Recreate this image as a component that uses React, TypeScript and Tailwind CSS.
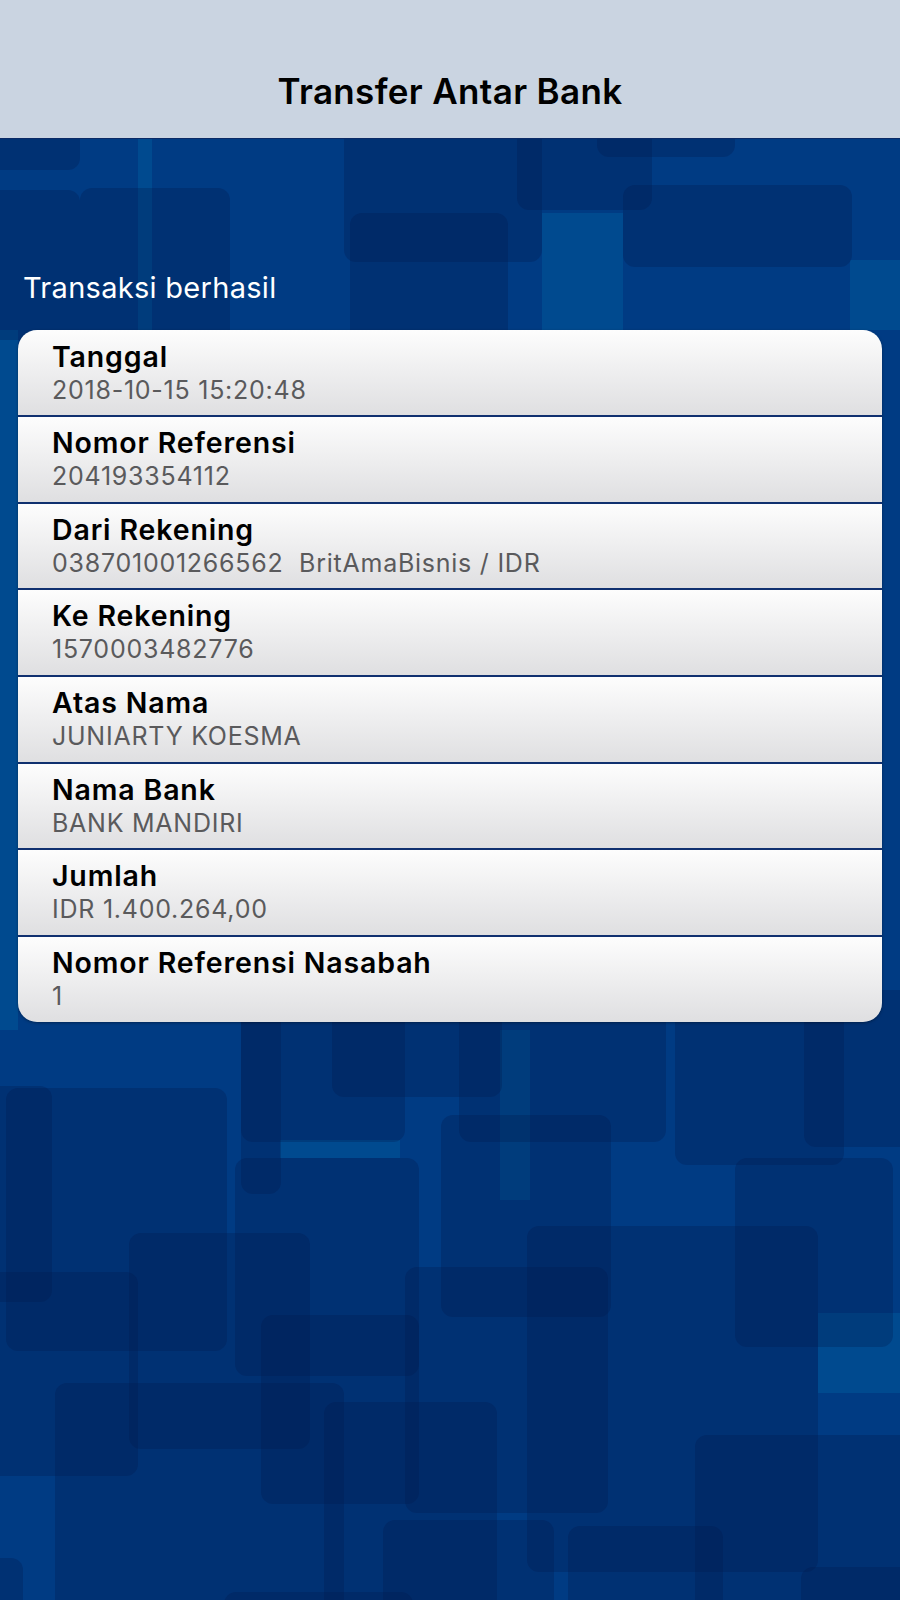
import React from 'react';

type Row = { label: string; value: string };

const rows: Row[] = [
  { label: 'Tanggal', value: '2018-10-15 15:20:48' },
  { label: 'Nomor Referensi', value: '204193354112' },
  { label: 'Dari Rekening', value: '038701001266562  BritAmaBisnis / IDR' },
  { label: 'Ke Rekening', value: '1570003482776' },
  { label: 'Atas Nama', value: 'JUNIARTY KOESMA' },
  { label: 'Nama Bank', value: 'BANK MANDIRI' },
  { label: 'Jumlah', value: 'IDR 1.400.264,00' },
  { label: 'Nomor Referensi Nasabah', value: '1' },
];

// decorative tiles of the backdrop: [x, y, w, h]
const lightTiles = [
  [138, 100, 14, 230],
  [542, 213, 81, 117],
  [850, 260, 60, 70],
  [500, 1030, 30, 170],
  [280, 1140, 120, 18],
  [818, 1313, 90, 80],
  [0, 330, 18, 700],
];

const darkTiles = [
  [-20, 100, 100, 70],
  [80, 188, 150, 200],
  [344, 100, 198, 162],
  [517, 100, 135, 110],
  [623, 185, 229, 82],
  [597, 100, 138, 57],
  [-20, 190, 100, 150],
  [350, 213, 158, 150],
  [-20, 1086, 72, 216],
  [6, 1088, 221, 263],
  [241, 990, 40, 204],
  [332, 990, 170, 107],
  [241, 990, 164, 152],
  [459, 990, 207, 152],
  [675, 990, 169, 175],
  [804, 990, 120, 157],
  [235, 1158, 184, 218],
  [129, 1233, 181, 216],
  [-20, 1272, 158, 204],
  [441, 1115, 170, 202],
  [527, 1226, 291, 346],
  [735, 1158, 158, 189],
  [405, 1267, 203, 246],
  [261, 1315, 158, 189],
  [55, 1383, 289, 260],
  [324, 1402, 173, 240],
  [695, 1435, 220, 200],
  [383, 1520, 171, 120],
  [568, 1526, 155, 120],
  [-20, 1558, 43, 80],
  [801, 1567, 120, 80],
  [224, 1592, 189, 40],
];

const Backdrop = () => (
  <svg
    className="absolute inset-0 h-full w-full"
    viewBox="0 0 900 1600"
    preserveAspectRatio="none"
  >
    <rect x="0" y="0" width="900" height="1600" fill="#003b83" />
    {lightTiles.map(([x, y, w, h], i) => (
      <rect key={`l${i}`} x={x} y={y} width={w} height={h} fill="#004a8f" />
    ))}
    {darkTiles.map(([x, y, w, h], i) => (
      <rect
        key={`d${i}`}
        x={x}
        y={y}
        width={w}
        height={h}
        rx="12"
        fill="#001a4d"
        fillOpacity="0.28"
      />
    ))}
  </svg>
);

const DetailRow = ({ label, value, first }: Row & { first: boolean }) => (
  <div
    className={`flex flex-col bg-gradient-to-b from-[#fdfdfd] to-[#dfdfe1] pl-[34px] ${
      first ? 'h-[85px] pt-[10px]' : 'h-[86.7px] border-t-2 border-[#10306f] pt-[9px]'
    }`}
  >
    <span className="text-[28.5px] font-semibold leading-[34px] tracking-[0.03em] text-black">
      {label}
    </span>
    <span className="mt-[2px] whitespace-pre text-[25px] leading-[29px] tracking-[0.03em] text-[#5a5a5c]">
      {value}
    </span>
  </div>
);

export default function App() {
  return (
    <div
      className="relative min-h-[1600px] w-full overflow-hidden"
      style={{ fontFamily: 'Inter, "Noto Sans", sans-serif' }}
    >
      <Backdrop />
      <div className="relative flex flex-col">
        <header className="h-[139px] border-b border-[#0b2a66] bg-[#cad4e1] pt-[71px] text-center">
          <h1 className="text-[35px] font-semibold leading-[41px] tracking-[0.01em] text-black">
            Transfer Antar Bank
          </h1>
        </header>

        <p className="ml-[23px] mt-[131px] text-[29px] leading-[35px] tracking-[0.01em] text-white">
          Transaksi berhasil
        </p>

        <div className="mx-[18px] mt-[25px] overflow-hidden rounded-[19px] shadow-[0_1px_3px_rgba(0,0,0,0.35)]">
          {rows.map((r, i) => (
            <DetailRow key={r.label} label={r.label} value={r.value} first={i === 0} />
          ))}
        </div>
      </div>
    </div>
  );
}
